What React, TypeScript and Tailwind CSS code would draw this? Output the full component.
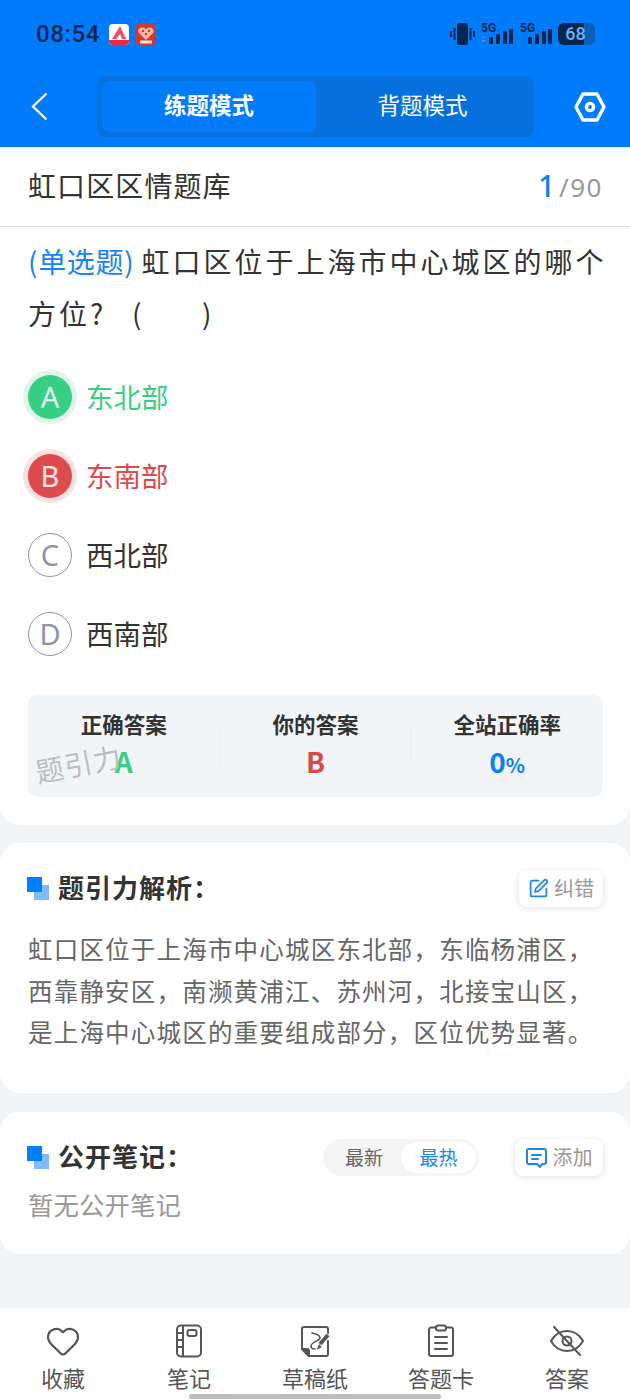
import { Heart, SquarePen } from "lucide-react";

const cjk = "font-['Noto_Sans_CJK_SC','Noto_Sans',sans-serif]";

const Signal = ({ arrows }: { arrows?: boolean }) => (
  <div className="relative w-[33px] h-[24px]">
    <span className="absolute left-[1px] top-0 font-['Roboto',sans-serif] font-bold text-[12px] leading-[12px] text-[#04264f]">5G</span>
    <svg width="33" height="24" viewBox="0 0 33 24" className="absolute left-0 top-0">
      {arrows && <path d="M1 16l2.500-2 2.500 2zM1 18l2.500 2 2.500-2z" fill="#4f93dd" />}
      <rect x="9" y="15" width="4" height="7" rx="1" fill="#04264f" />
      <rect x="16" y="12" width="4" height="10" rx="1" fill="#04264f" />
      <rect x="23" y="9" width="4" height="13" rx="1" fill="#04264f" />
      <rect x="29" y="7" width="4" height="15" rx="1" fill="#04264f" />
    </svg>
  </div>
);

const StatusBar = () => (
  <div className="flex items-center justify-between h-[69px] pl-[36px] pr-[35px] pb-[1px]">
    <div className="flex items-center gap-[9px]">
      <span className="font-['Roboto',sans-serif] font-medium text-[24px] leading-none tracking-[0.6px] text-[#04264f]">08:54</span>
      <div className="flex gap-[7px]">
        <svg width="20" height="21" viewBox="0 0 20 21">
          <rect width="20" height="21" rx="4" fill="#fff" />
          <path d="M3 15L11 2l6 13h-4l-2-5-4 5z" fill="#f0505f" />
          <path d="M0 16h20v1a4 4 0 0 1-4 4H4a4 4 0 0 1-4-4z" fill="#e8294a" />
        </svg>
        <svg width="20" height="21" viewBox="0 0 20 21">
          <rect width="20" height="21" rx="4" fill="#d9362b" />
          <path d="M10 16L2.500 8.500C1 4 7.500 1.500 10 5.500 12.500 1.500 19 4 17.500 8.500z" fill="#f5b9a8" />
          <circle cx="7" cy="7" r="1.200" fill="#d9362b" />
          <circle cx="13" cy="7" r="1.200" fill="#d9362b" />
          <circle cx="10" cy="10" r="1.200" fill="#d9362b" />
          <rect x="4" y="16.500" width="12" height="3" fill="#fbe4d8" />
        </svg>
      </div>
    </div>
    <div className="flex items-center gap-[6px]">
      <svg width="25" height="22" viewBox="0 0 25 22" className="mr-[-1px]">
        <rect x="7" y="0" width="11" height="22" rx="2" fill="#04264f" />
        <rect x="0" y="8" width="2" height="6" fill="#04264f" />
        <rect x="3.500" y="5" width="2" height="12" fill="#04264f" />
        <rect x="19.500" y="5" width="2" height="12" fill="#04264f" />
        <rect x="23" y="8" width="2" height="6" fill="#04264f" />
      </svg>
      <Signal arrows />
      <Signal />
      <div className="relative flex h-[22px] w-[37px] overflow-hidden rounded-[6px] bg-[#0a5fb8]">
        <div className="w-[26px] bg-[#04264f]" />
        <span className="absolute inset-0 flex items-center justify-center pr-[2px] font-['Roboto',sans-serif] font-medium text-[18px] leading-none text-[#6fb1f5]">68</span>
      </div>
    </div>
  </div>
);

const NavBar = () => (
  <div className="flex items-center h-[78px] pb-[3px]">
    <div className="w-[97px] pl-[31px]">
      <svg width="17" height="29" viewBox="0 0 17 29" fill="none" stroke="#fff" strokeWidth="2.200">
        <path d="M15.500 1.500L2 14.500l13.500 13" />
      </svg>
    </div>
    <div className={`flex w-[437px] h-[61px] rounded-[8px] bg-[#0670dc] p-[5px] text-[22.500px] text-white ${cjk}`}>
      <div className="flex w-[214px] items-center justify-center rounded-[8px] bg-[#007cfb] pb-[3px] font-bold">练题模式</div>
      <div className="flex flex-1 items-center justify-center pb-[3px]">背题模式</div>
    </div>
    <div className="flex flex-1 justify-center pl-[16px]">
      <svg width="32" height="30" viewBox="0 0 32 30" fill="none" stroke="#fff" strokeWidth="3.400" strokeLinejoin="round">
        <path d="M9 2h14l7 13-7 13H9L2 15z" />
        <circle cx="16" cy="15" r="3.600" />
      </svg>
    </div>
  </div>
);

const Option = ({ letter, text, tone }: { letter: string; text: string; tone?: "right" | "wrong" }) => {
  const badge =
    tone === "right"
      ? "bg-[#38ce83] text-[#e4f9ee] ring-[5px] ring-[#def7ea]"
      : tone === "wrong"
        ? "bg-[#de4b4d] text-[#fde6e6] ring-[5px] ring-[#fae2e2]"
        : "border border-[#8f93ab] text-[#8f93ab]";
  const color = tone === "right" ? "text-[#38ce83]" : tone === "wrong" ? "text-[#de4b4d]" : "text-[#333333]";
  return (
    <div className="flex items-center gap-[14px] h-[79px]">
      <div className={`flex h-[44px] w-[44px] items-center justify-center rounded-full font-['Noto_Sans',sans-serif] text-[29px] leading-none ${badge}`}>
        {letter}
      </div>
      <span className={`text-[27.500px] leading-none ${color}`}>{text}</span>
    </div>
  );
};

const StatCol = ({ label, children, divider }: { label: string; children: React.ReactNode; divider?: boolean }) => (
  <div className="relative flex flex-1 flex-col items-center pt-[15px]">
    <div className="text-[21.500px] font-bold leading-[28px] text-[#333333]">{label}</div>
    <div className="mt-[6px] font-bold leading-[34px]">{children}</div>
    {divider && <div className="absolute right-0 top-[33px] h-[36px] w-px bg-[#e9ecf0]" />}
  </div>
);

const SectionTitle = ({ title }: { title: string }) => (
  <div className="-ml-[1px] flex items-center gap-[9px]">
    <div className="relative h-[23px] w-[22px]">
      <div className="absolute bottom-0 right-0 h-[15px] w-[15px] bg-[#7cbcff]" />
      <div className="absolute left-0 top-0 h-[15px] w-[15px] bg-[#0080ff]" />
    </div>
    <span className="pb-[3px] text-[26px] font-bold leading-none tracking-[1px] text-[#333333]">{title}</span>
  </div>
);

const Tab = ({ label, icon }: { label: string; icon: React.ReactNode }) => (
  <div className="flex w-[126px] flex-col items-center">
    <div className="flex h-[36px] items-center justify-center">{icon}</div>
    <span className="mt-[5px] text-[22px] leading-[26px] text-[#555555]">{label}</span>
  </div>
);

const stroke = { fill: "none", stroke: "#555555", strokeWidth: 2, strokeLinecap: "round", strokeLinejoin: "round" } as const;

export default function App() {
  return (
    <div className={`relative flex h-[1400px] w-[630px] flex-col overflow-hidden bg-[#f2f5f8] ${cjk}`}>
      <div className="h-[147px] bg-[#007bfb]">
        <StatusBar />
        <NavBar />
      </div>

      <div className="h-[678px] rounded-b-[20px] bg-white">
        <div className="flex h-[80px] items-center justify-between border-b border-[#dfdfdf] pb-[3px] pl-[28px] pr-[27px]">
          <span className="text-[28px] tracking-[1.100px] text-[#333333]">虹口区区情题库</span>
          <div className="flex items-baseline font-['Noto_Sans',sans-serif] text-[#999999]">
            <span className="text-[30px] font-medium text-[#0f82f2]">1</span>
            <span className="ml-[4px] text-[26px] tracking-[1.500px]">/90</span>
          </div>
        </div>

        <div className="pl-[28px] pr-[27px]">
          <div className="mt-[8px] whitespace-nowrap text-[28px] leading-[52px] tracking-[3px] text-[#333333]">
            <div className="flex">
              <span className="mr-[7px] tracking-[0.700px] text-[#1585f5]">(单选题)</span>
              <span>虹口区位于上海市中心城区的哪个</span>
            </div>
            <div className="flex">
              <span className="w-[104px]">方位?</span>
              <span className="w-[70px]">(</span>
              <span>)</span>
            </div>
          </div>
          <div className="mt-[18px]">
            <Option letter="A" text="东北部" tone="right" />
            <Option letter="B" text="东南部" tone="wrong" />
            <Option letter="C" text="西北部" />
            <Option letter="D" text="西南部" />
          </div>

          <div className="relative mt-[22px] flex h-[102px] rounded-[9px] bg-[#f2f5f8]">
            <StatCol label="正确答案" divider>
              <span className="text-[28px] text-[#38ce83]">A</span>
            </StatCol>
            <StatCol label="你的答案" divider>
              <span className="text-[28px] text-[#d9474a]">B</span>
            </StatCol>
            <StatCol label="全站正确率">
              <span className="text-[28px] text-[#0a82f7]">0</span>
              <span className="text-[20px] text-[#0a82f7]">%</span>
            </StatCol>
            <span className="absolute left-[7px] top-[54px] -rotate-[11deg] text-[28px] leading-none tracking-[1px] text-[#bdbdbd]">题引力</span>
          </div>
        </div>
      </div>

      <div className="mt-[18px] h-[250px] rounded-[20px] bg-white pl-[28px] pr-[27px] pt-[27px]">
        <div className="flex items-center justify-between">
          <SectionTitle title="题引力解析：" />
          <div className="flex h-[37px] w-[84px] items-center justify-center gap-[5px] rounded-[8px] bg-white shadow-[0_1px_6px_rgba(0,0,0,0.12)]">
            <SquarePen size={21} strokeWidth={2} className="text-[#1f86e8]" />
            <span className="pb-[1px] text-[20px] leading-none text-[#999999]">纠错</span>
          </div>
        </div>
        <p className="mt-[21px] text-[24.500px] leading-[41.500px] tracking-[1.200px] text-[#666666]">
          虹口区位于上海市中心城区东北部，东临杨浦区，西靠静安区，南濒黄浦江、苏州河，北接宝山区，是上海中心城区的重要组成部分，区位优势显著。
        </p>
      </div>

      <div className="mt-[19px] h-[142px] rounded-[20px] bg-white pl-[28px] pr-[27px] pt-[27px]">
        <div className="flex items-center justify-between">
          <SectionTitle title="公开笔记：" />
          <div className="flex items-center gap-[36px]">
            <div className="flex h-[37px] w-[156px] items-center rounded-full bg-[#f5f5f5] p-[3px] text-[19px] leading-none">
              <span className="flex-1 pb-[2px] pl-[1px] text-center text-[#666666]">最新</span>
              <span className="flex h-[31px] w-[75px] items-center justify-center rounded-full bg-white pb-[2px] text-[#1f86e8]">最热</span>
            </div>
            <div className="flex h-[37px] w-[88px] items-center justify-center gap-[6px] rounded-[8px] bg-white shadow-[0_1px_6px_rgba(0,0,0,0.12)]">
              <svg width="21" height="20" viewBox="0 0 21 20" fill="none" stroke="#1f86e8" strokeWidth="2" strokeLinejoin="round" strokeLinecap="round">
                <path d="M3 1h15a2 2 0 0 1 2 2v11a2 2 0 0 1-2 2h-2l-2 3-3-3H3a2 2 0 0 1-2-2V3a2 2 0 0 1 2-2z" />
                <path d="M6 7h9M6 11h6" />
              </svg>
              <span className="pb-[1px] text-[20px] leading-none text-[#999999]">添加</span>
            </div>
          </div>
        </div>
        <p className="mt-[10px] text-[25.500px] leading-[36px] text-[#999999]">暂无公开笔记</p>
      </div>

      <div className="mt-auto flex h-[92px] justify-center bg-white pt-[15px]">
        <Tab label="收藏" icon={<Heart size={36} strokeWidth={1.500} className="text-[#555555]" />} />
        <Tab
          label="笔记"
          icon={
            <svg width="28" height="34" viewBox="0 0 28 34" {...stroke}>
              <rect x="2" y="1.500" width="24" height="31" rx="4" />
              <path d="M8 2v30M2 9h6M2 16h6M2 23h6" />
              <rect x="12.500" y="6" width="9" height="6" rx="2" />
            </svg>
          }
        />
        <Tab
          label="草稿纸"
          icon={
            <svg width="29" height="31" viewBox="0 0 29 31" {...stroke}>
              <path d="M27 7V3a2 2 0 0 0-2-2H3a2 2 0 0 0-2 2v20l7 7h17a2 2 0 0 0 2-2V15" />
              <path d="M1 23h5a2 2 0 0 1 2 2v5z" fill="#555555" />
              <path d="M11 7c5 1 8 3 8 5 0 3-9 4-9 8 0 2 2 3 4 3" strokeWidth="1.600" />
              <path d="M27 9l-8 9" strokeWidth="4" strokeLinecap="butt" />
              <path d="M18 19l-1.500 4 3.500-2z" fill="#555555" strokeWidth="1" />
            </svg>
          }
        />
        <Tab
          label="答题卡"
          icon={
            <svg width="28" height="34" viewBox="0 0 28 34" {...stroke}>
              <path d="M8 3.500H4a2 2 0 0 0-2 2V30a2 2 0 0 0 2 2h20a2 2 0 0 0 2-2V5.500a2 2 0 0 0-2-2h-4" />
              <rect x="9" y="1.500" width="10" height="5" rx="2" />
              <path d="M8 13h12M8 19h12M8 25h12" />
            </svg>
          }
        />
        <Tab
          label="答案"
          icon={
            <svg width="34" height="30" viewBox="0 0 34 30" {...stroke}>
              <path d="M1 15c4-7 10-10 16-10s12 3 16 10c-4 7-10 10-16 10S5 22 1 15z" />
              <circle cx="17" cy="15" r="4.500" />
              <path d="M4 1l26 28" />
            </svg>
          }
        />
      </div>

      <div className="absolute bottom-[1px] left-[189px] h-[5px] w-[252px] rounded-full bg-[#bdbdbd]" />
    </div>
  );
}
